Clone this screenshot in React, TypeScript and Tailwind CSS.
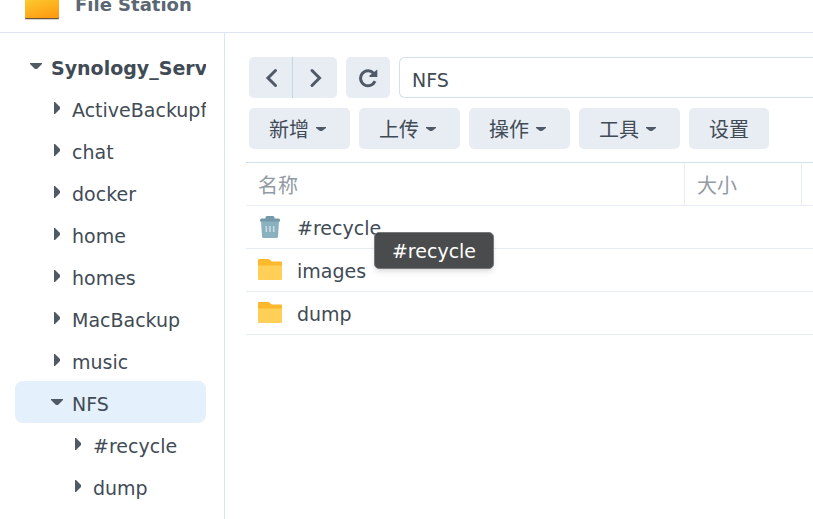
import { useState } from 'react'

type Node = { name: string; level: number; open?: boolean }

const TREE: Node[] = [
  { name: 'Synology_Server', level: 0, open: true },
  { name: 'ActiveBackupforBusiness', level: 1 },
  { name: 'chat', level: 1 },
  { name: 'docker', level: 1 },
  { name: 'home', level: 1 },
  { name: 'homes', level: 1 },
  { name: 'MacBackup', level: 1 },
  { name: 'music', level: 1 },
  { name: 'NFS', level: 1, open: true },
  { name: '#recycle', level: 2 },
  { name: 'dump', level: 2 },
]

const INDENT = ['pl-[15px]', 'pl-9', 'pl-[57px]']

const ACTIONS = [
  { label: '新增', menu: true },
  { label: '上传', menu: true },
  { label: '操作', menu: true },
  { label: '工具', menu: true },
  { label: '设置', menu: false },
]

const FILES = [
  { name: '#recycle', trash: true, tip: true },
  { name: 'images', trash: false, tip: false },
  { name: 'dump', trash: false, tip: false },
]

function Logo() {
  return (
    <svg width="36" height="21" viewBox="0 0 36 21" className="shrink-0">
      <defs>
        <linearGradient id="logo" x1="0" y1="0" x2="0.6" y2="1">
          <stop offset="0" stopColor="#fbcb2c" />
          <stop offset="1" stopColor="#ff9d14" />
        </linearGradient>
      </defs>
      <path d="M1 0h34v19q0 1-1 1H2q-1 0-1-1z" fill="#d8d4d0" />
      <path d="M1 0h34v18q0 1-1 1H2q-1 0-1-1z" fill="#6d5138" />
      <path d="M1 0h34v17q0 1-1 1H2q-1 0-1-1z" fill="url(#logo)" />
    </svg>
  )
}

function TreeArrow({ open }: { open?: boolean }) {
  return (
    <svg width="12" height="12" viewBox="0 0 12 12" fill="#505a66" className="shrink-0">
      {open ? <path d="M0 3h12v1L7 9H5L0 4z" /> : <path d="M3 0h1l5 5v2l-5 5H3z" />}
    </svg>
  )
}

function MenuCaret() {
  return (
    <svg width="10" height="6" viewBox="0 0 10 6" fill="#505a66">
      <path d="M0 1h10v1L6 5H4L0 2z" />
    </svg>
  )
}

function Chevron({ right }: { right?: boolean }) {
  return (
    <svg width="20" height="20" viewBox="0 0 20 20" fill="none" stroke="#505a66" strokeWidth="3" strokeLinecap="round">
      <path d={right ? 'M7 2.500l7.500 7.500-7.500 7.500' : 'M14.500 2.500L7 10l7.500 7.500'} />
    </svg>
  )
}

function Refresh() {
  return (
    <svg width="20" height="20" viewBox="0 0 20 20" fill="none">
      <path d="M15.600 5.200A7.500 7.500 0 1 0 17 13.200" stroke="#505a66" strokeWidth="3" />
      <path d="M19.300 1.500v7.500H11.500V7.500z" fill="#505a66" />
    </svg>
  )
}

function FolderIcon() {
  return (
    <svg width="24" height="22" viewBox="0 0 24 22" className="shrink-0">
      <path d="M0 1q0-1 1-1h9q1 0 1.700.7L14 2.500h9q1 0 1 1V8H0z" fill="#fdb92c" />
      <path d="M0 6.500h24V20q0 1-1 1H1q-1 0-1-1z" fill="#ffcf57" />
    </svg>
  )
}

function TrashIcon() {
  return (
    <svg width="24" height="24" viewBox="0 0 24 24" className="shrink-0">
      <path d="M3 6h18l-1 15.500q0 1.500-1.500 1.500h-13Q4 23 4 21.500z" fill="#8bb0c0" />
      <path d="M2 5q0-1.500 1.500-1.500H7.500V2.500q0-1.500 1.500-1.500h6q1.500 0 1.500 1.500v1h4Q22 3.500 22 5v1.500H2z" fill="#7499a9" />
      <path d="M8.300 11v6M12 11v6M15.700 11v6" stroke="#c9dce4" strokeWidth="1.600" />
    </svg>
  )
}

export default function App() {
  const [path, setPath] = useState('NFS')

  return (
    <div className="flex min-h-screen flex-col overflow-hidden bg-white font-['DejaVu_Sans','Noto_Sans_CJK_SC',sans-serif] text-[19px] text-[#414b55]">
      <header className="flex h-[33px] items-start gap-[15px] border-b border-[#dde6ef] pl-6">
        <Logo />
        <h1 className="text-[18px] font-bold leading-[10px] text-[#5b6773]">File Station</h1>
      </header>

      <div className="flex flex-1">
        <nav className="w-[225px] shrink-0 border-r border-[#dde6ef] pl-[15px] pr-[18px] pt-3">
          <ul>
            {TREE.map(({ name, level, open }, i) => (
              <li key={i}>
                <button
                  className={`flex h-[42px] w-full items-center gap-[9px] overflow-hidden whitespace-nowrap rounded-lg text-left ${INDENT[level]} ${
                    level === 0 ? 'font-bold' : ''
                  } ${name === 'NFS' ? 'bg-[#e4f0fc]' : ''}`}
                >
                  <TreeArrow open={open} />
                  <span className="pt-1">{name}</span>
                </button>
              </li>
            ))}
          </ul>
        </nav>

        <main className="min-w-0 flex-1 pl-[21px] pt-6">
          <div className="flex gap-[9px] pl-[3px]">
            <div className="flex shrink-0">
              <button aria-label="后退" className="flex h-[41px] w-11 items-center justify-center rounded-l-[5px] border-r border-[#c5d6e4] bg-[#e8edf4]">
                <Chevron />
              </button>
              <button aria-label="前进" className="flex h-[41px] w-11 items-center justify-center rounded-r-[5px] bg-[#e8edf4]">
                <Chevron right />
              </button>
            </div>
            <button aria-label="刷新" className="flex h-[41px] w-11 shrink-0 items-center justify-center rounded-[5px] bg-[#e8edf4]">
              <Refresh />
            </button>
            <input
              aria-label="路径"
              value={path}
              onChange={(e) => setPath(e.target.value)}
              className="h-[41px] min-w-0 flex-1 rounded-l-[6px] border border-r-0 border-[#d3e0ea] pl-3 pt-1 outline-none"
            />
          </div>

          <div className="mt-2.5 flex gap-[9px] pl-[3px] text-[20px]">
            {ACTIONS.map(({ label, menu }) => (
              <button
                key={label}
                className={`flex h-[41px] shrink-0 items-center gap-[7px] rounded-[5px] bg-[#e8edf4] pl-5 leading-6 ${menu ? 'w-[101px]' : 'w-20'}`}
              >
                <span className="pt-0.5">{label}</span>
                {menu && <MenuCaret />}
              </button>
            ))}
          </div>

          <table className="mt-[13px] w-full table-fixed border-separate border-spacing-0">
            <thead>
              <tr className="text-left text-[20px] leading-6 text-[#929aa3]">
                <th className="h-11 w-[439px] border-y border-r border-b-[#e6ecf3] border-r-[#e6ecf3] border-t-[#d3e0ea] pl-3 pt-1 font-normal">名称</th>
                <th className="w-[117px] border-y border-r border-b-[#e6ecf3] border-r-[#e6ecf3] border-t-[#d3e0ea] pl-3 pt-1 font-normal">大小</th>
                <th className="border-y border-b-[#e6ecf3] border-t-[#d3e0ea]" />
              </tr>
            </thead>
            <tbody>
              {FILES.map(({ name, trash, tip }) => (
                <tr key={name}>
                  <td className="h-[43px] border-b border-[#e6ecf3] pl-3">
                    <div className="relative flex items-center gap-[15px]">
                      {trash ? <TrashIcon /> : <FolderIcon />}
                      <span className="pt-0.5 leading-6">{name}</span>
                      {tip && (
                        <div
                          role="tooltip"
                          className="absolute left-[116px] top-[18px] z-10 flex h-[37px] w-[120px] items-center justify-center rounded-[5px] border border-[#77797b] bg-[#3c3d3e]/93 pt-0.5 text-white shadow-md"
                        >
                          {name}
                        </div>
                      )}
                    </div>
                  </td>
                  <td className="border-b border-[#e6ecf3]" />
                  <td className="border-b border-[#e6ecf3]" />
                </tr>
              ))}
            </tbody>
          </table>
        </main>
      </div>
    </div>
  )
}
